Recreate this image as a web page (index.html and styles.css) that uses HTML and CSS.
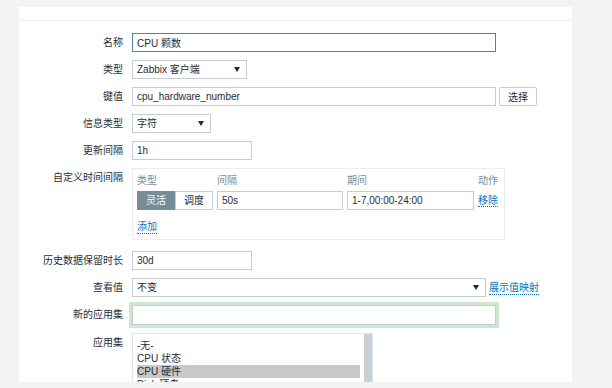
FILE: index.html
```html
<!DOCTYPE html>
<html lang="zh-CN">
<head>
    <meta charset="UTF-8">
    <meta name="viewport" content="width=device-width, initial-scale=1.0">
    <title>监控项</title>
    <link rel="stylesheet" href="styles.css">
</head>
<body>
    <div class="panel">
        <div class="panel-head"></div>
        <form class="item-form">
            <label class="field-label" for="name">名称</label>
            <div><input class="text-box wide focused" id="name" type="text" value="CPU 颗数"></div>

            <label class="field-label" for="type">类型</label>
            <div><span class="select-wrap type-select"><select id="type"><option>Zabbix 客户端</option></select></span></div>

            <label class="field-label" for="key">键值</label>
            <div class="inline">
                <input class="text-box wide" id="key" type="text" value="cpu_hardware_number">
                <button type="button" class="btn">选择</button>
            </div>

            <label class="field-label" for="valueType">信息类型</label>
            <div><span class="select-wrap value-select"><select id="valueType"><option>字符</option></select></span></div>

            <label class="field-label" for="delay">更新间隔</label>
            <div><input class="text-box short" id="delay" type="text" value="1h"></div>

            <label class="field-label">自定义时间间隔</label>
            <div>
                <div class="interval-box">
                    <div class="interval-grid">
                        <span class="col-head">类型</span>
                        <span class="col-head">间隔</span>
                        <span class="col-head">期间</span>
                        <span class="col-head">动作</span>

                        <div class="toggle">
                            <span class="toggle-btn active">灵活</span>
                            <span class="toggle-btn">调度</span>
                        </div>
                        <input class="text-box cell" type="text" value="50s">
                        <input class="text-box cell" type="text" value="1-7,00:00-24:00">
                        <div><a class="link" href="#">移除</a></div>
                    </div>
                    <a class="link add-link" href="#">添加</a>
                </div>
            </div>

            <label class="field-label" for="history">历史数据保留时长</label>
            <div><input class="text-box short" id="history" type="text" value="30d"></div>

            <label class="field-label" for="valuemap">查看值</label>
            <div class="inline">
                <span class="select-wrap map-select"><select id="valuemap"><option>不变</option></select></span>
                <a class="link map-link" href="#">展示值映射</a>
            </div>

            <label class="field-label" for="newApp">新的应用集</label>
            <div><input class="text-box wide glow" id="newApp" type="text" value=""></div>

            <label class="field-label">应用集</label>
            <div>
                <div class="listbox">
                    <ul class="list-items">
                        <li>-无-</li>
                        <li>CPU 状态</li>
                        <li class="selected">CPU 硬件</li>
                        <li>Disk 硬盘</li>
                        <li>Memory 内存</li>
                    </ul>
                    <div class="scrollbar"></div>
                </div>
            </div>
        </form>
    </div>
</body>
</html>
```

FILE: styles.css
```css
body {
    margin: 0;
    background-color: #f3f3f3;
    font-family: "Liberation Sans", Arial, "Noto Sans CJK SC", sans-serif;
    font-size: 10px;
    color: #1f2c33;
}

.panel {
    margin: 7px 0 0 19px;
    width: 553px;
    height: 375px;
    background-color: #ffffff;
    overflow: hidden;
}

.panel-head {
    height: 13px;
    border-bottom: 1px solid #ebeef0;
}

.item-form {
    display: grid;
    grid-template-columns: 104px 1fr;
    column-gap: 9px;
    row-gap: 8px;
    padding-top: 12px;
}

.field-label {
    text-align: right;
    line-height: 19px;
    white-space: nowrap;
}

.inline {
    display: flex;
    align-items: center;
}

.text-box {
    box-sizing: border-box;
    height: 19px;
    padding: 0 4px;
    border: 1px solid #c4cdd2;
    font-family: inherit;
    font-size: 10px;
    color: #1f2c33;
    background-color: #ffffff;
    outline: none;
}

.wide {
    width: 364px;
}

.short {
    width: 120px;
}

.focused {
    border-color: #4a83ad;
}

.glow {
    height: 20px;
    box-shadow: 0 0 0 3px #cfe7cf;
}

.btn {
    box-sizing: border-box;
    height: 19px;
    width: 38px;
    margin-left: 3px;
    padding: 0;
    border: 1px solid #c4cdd2;
    border-radius: 2px;
    background-color: #ffffff;
    font-family: inherit;
    font-size: 10px;
    color: #1f2c33;
}

.select-wrap {
    position: relative;
    display: inline-block;
}

.select-wrap select {
    -webkit-appearance: none;
    appearance: none;
    box-sizing: border-box;
    display: block;
    height: 19px;
    width: 100%;
    padding: 0 4px;
    border: 1px solid #c4cdd2;
    border-radius: 0;
    background-color: #ffffff;
    font-family: inherit;
    font-size: 10px;
    color: #1f2c33;
}

.select-wrap::after {
    content: "";
    position: absolute;
    right: 7px;
    top: 7px;
    border-left: 3px solid transparent;
    border-right: 3px solid transparent;
    border-top: 5px solid #1f2c33;
}

.type-select {
    width: 115px;
}

.value-select {
    width: 79px;
}

.map-select {
    width: 354px;
}

.map-link {
    margin-left: 3px;
}

.link {
    color: #0275b8;
    text-decoration: none;
    border-bottom: 1px dotted #0275b8;
    line-height: 13px;
    white-space: nowrap;
}

.interval-box {
    box-sizing: border-box;
    width: 373px;
    height: 72px;
    margin-bottom: 3px;
    padding: 5px 4px 0 4px;
    border: 1px solid #ebeef0;
}

.interval-grid {
    display: grid;
    grid-template-columns: 76px 126px 127px 1fr;
    column-gap: 4px;
    row-gap: 3px;
    align-items: center;
}

.col-head {
    color: #768d99;
    line-height: 14px;
    white-space: nowrap;
}

.toggle {
    display: flex;
    height: 19px;
}

.toggle-btn {
    box-sizing: border-box;
    flex: 1;
    text-align: center;
    line-height: 17px;
    border: 1px solid #c4cdd2;
    background-color: #ffffff;
}

.toggle-btn.active {
    background-color: #768d99;
    border-color: #768d99;
    color: #ffffff;
}

.cell {
    width: 100%;
}

.add-link {
    display: inline-block;
    margin-top: 10px;
}

.listbox {
    display: flex;
    box-sizing: border-box;
    width: 241px;
    height: 80px;
    border: 1px solid #dfe4e7;
}

.list-items {
    flex: 1;
    margin: 0;
    padding: 5px 4px 0 4px;
    list-style: none;
}

.list-items li {
    line-height: 13px;
    height: 13px;
}

.list-items .selected {
    background-color: #c8c8c8;
}

.scrollbar {
    width: 8px;
    background-color: #c8d0d6;
}
```
